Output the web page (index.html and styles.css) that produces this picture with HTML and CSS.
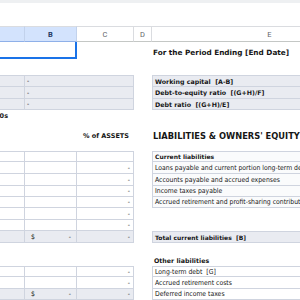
FILE: index.html
```html
<!DOCTYPE html>
<html>
<head>
<meta charset="utf-8">
<link rel="stylesheet" href="styles.css">
</head>
<body>
<div class="topbar"></div>
<div class="sheet">
  <div class="c h hs"></div>
  <div class="c h hs hb">B</div>
  <div class="c h">C</div>
  <div class="c h">D</div>
  <div class="c h">E</div>

  <div class="c sel"></div>
  <div class="c"></div>
  <div class="c"></div>
  <div class="c title">For the Period Ending [End Date]</div>

  <div class="c full"></div>

  <div class="c g b bt"></div>
  <div class="c g b bt span2">-</div>
  <div class="c"></div>
  <div class="c g b bt bl ratio">Working capital&nbsp; [A-B]</div>

  <div class="c g b"></div>
  <div class="c g b span2">-</div>
  <div class="c"></div>
  <div class="c g b bl ratio">Debt-to-equity ratio&nbsp; [(G+H)/F]</div>

  <div class="c g b"></div>
  <div class="c g b span2">-</div>
  <div class="c"></div>
  <div class="c g b bl ratio">Debt ratio&nbsp; [(G+H)/E]</div>

  <div class="c bold right units">in $000s</div>
  <div class="c span4"></div>

  <div class="c"></div>
  <div class="c"></div>
  <div class="c bold right pct">% of ASSETS</div>
  <div class="c"></div>
  <div class="c title big">LIABILITIES &amp; OWNERS' EQUITY</div>

  <div class="c b bt"></div>
  <div class="c b bt"></div>
  <div class="c b bt"></div>
  <div class="c"></div>
  <div class="c b bt bl bold lt">Current liabilities</div>

  <div class="c b"></div>
  <div class="c b"></div>
  <div class="c b right">-</div>
  <div class="c"></div>
  <div class="c b bl lt">Loans payable and current portion long-term debt</div>

  <div class="c b"></div>
  <div class="c b"></div>
  <div class="c b right">-</div>
  <div class="c"></div>
  <div class="c b bl lt">Accounts payable and accrued expenses</div>

  <div class="c b"></div>
  <div class="c b"></div>
  <div class="c b right">-</div>
  <div class="c"></div>
  <div class="c b bl lt">Income taxes payable</div>

  <div class="c b"></div>
  <div class="c b"></div>
  <div class="c b right">-</div>
  <div class="c"></div>
  <div class="c b bl lt">Accrued retirement and profit-sharing contributions</div>

  <div class="c b"></div>
  <div class="c b"></div>
  <div class="c b right">-</div>
  <div class="c span2"></div>

  <div class="c b"></div>
  <div class="c b"></div>
  <div class="c b right">-</div>
  <div class="c span2"></div>

  <div class="c g b"></div>
  <div class="c g b money"><span>$</span><span>-</span></div>
  <div class="c g b right">-</div>
  <div class="c"></div>
  <div class="c g b bt bl bold">Total current liabilities&nbsp; [B]</div>

  <div class="c full"></div>

  <div class="c span4"></div>
  <div class="c bold other">Other liabilities</div>

  <div class="c b bt"></div>
  <div class="c b bt"></div>
  <div class="c b bt right">-</div>
  <div class="c"></div>
  <div class="c b bt bl">Long-term debt&nbsp; [G]</div>

  <div class="c b"></div>
  <div class="c b"></div>
  <div class="c b right">-</div>
  <div class="c"></div>
  <div class="c b bl">Accrued retirement costs</div>

  <div class="c g b"></div>
  <div class="c g b money"><span>$</span><span>-</span></div>
  <div class="c g b right">-</div>
  <div class="c"></div>
  <div class="c b bl">Deferred income taxes</div>
</div>
</body>
</html>
```

FILE: styles.css
```css
html, body {
  margin: 0;
  padding: 0;
}
body {
  width: 300px;
  height: 300px;
  overflow: hidden;
  background: #ffffff;
  font-family: "DejaVu Sans Condensed", "DejaVu Sans", sans-serif;
  color: #161616;
}
.topbar {
  height: 26px;
  box-sizing: border-box;
  border-top: 3px solid #eef0f2;
  background: #ffffff;
}
.sheet {
  display: grid;
  grid-template-columns: 25px 52px 57px 18px 236px;
  grid-template-rows: 16px 17px 16px 12px 12px 11px 11px 30px 11px 12px 12px 11px 11px 12px 11px 12px 11px 12px 11px 12px 11px;
}
.c {
  box-sizing: border-box;
  min-width: 0;
  display: flex;
  align-items: center;
  white-space: nowrap;
  font-size: 6.8px;
  padding: 0 2px;
}
.h {
  justify-content: center;
  font-family: Roboto, "Liberation Sans", sans-serif;
  font-size: 7.5px;
  color: #5f6368;
  border-top: 1px solid #dadce0;
  border-right: 1px solid #dadce0;
  border-bottom: 1px solid #c4c7c5;
  background: #ffffff;
}
.hs {
  background: #d3e3fd;
  border-right-color: #c2d2ec;
  border-bottom-color: #8fb0e8;
}
.hb {
  font-weight: bold;
  color: #1f3a64;
}
.sel {
  grid-column: span 2;
  border-right: 2px solid #1a73e8;
  border-bottom: 2px solid #1a73e8;
}
.bold {
  font-family: "DejaVu Sans", sans-serif;
  font-weight: bold;
  font-size: 6px;
}
.title {
  font-family: "DejaVu Sans", sans-serif;
  font-weight: bold;
  font-size: 7.3px;
  padding-left: 1px;
  padding-top: 4px;
}
.big {
  font-size: 8.3px;
  padding-top: 0;
}
.ratio {
  font-family: "DejaVu Sans", sans-serif;
  font-weight: bold;
  font-size: 6.3px;
}
.other {
  font-size: 6.3px;
  padding-top: 1px;
}
.full { grid-column: 1 / -1; }
.span2 { grid-column: span 2; }
.span4 { grid-column: span 4; }
.b {
  border-right: 1px solid #cfd4df;
  border-bottom: 1px solid #cfd4df;
}
.bt { border-top: 1px solid #cfd4df; }
.bl { border-left: 1px solid #cfd4df; }
.g { background: #e9ebf1; }
.right { justify-content: flex-end; padding-right: 3px; }
.lt { background: #fafbfc; }
.units {
  justify-content: flex-end;
  padding-right: 17px;
  font-size: 6.5px;
}
.pct {
  padding-right: 5px;
  font-size: 6.5px;
}
.money {
  justify-content: space-between;
  padding: 0 5px 0 6px;
}
```
